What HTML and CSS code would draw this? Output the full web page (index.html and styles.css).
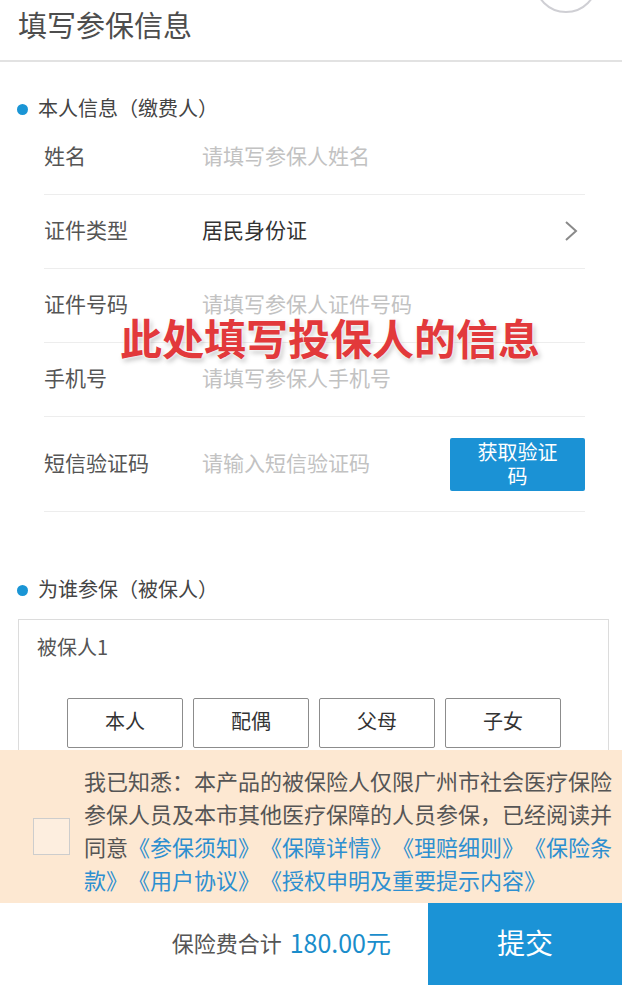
FILE: index.html
```html
<!DOCTYPE html>
<html lang="zh-CN">
<head>
<meta charset="utf-8">
<title>填写参保信息</title>
<link rel="stylesheet" href="styles.css">
</head>
<body>
<div class="page">
  <div class="main">
    <header class="header">
      <h1 class="title">填写参保信息</h1>
      <span class="corner-circle"></span>
    </header>

    <div class="section-title section-title-1"><span class="dot"></span>本人信息（缴费人）</div>
    <div class="form">
      <div class="row">
        <span class="label">姓名</span>
        <span class="placeholder">请填写参保人姓名</span>
      </div>
      <div class="row">
        <span class="label">证件类型</span>
        <span class="value">居民身份证</span>
        <svg class="chevron" width="14" height="22" viewBox="0 0 14 22"><polyline points="2,2 12,11 2,20" fill="none" stroke="#8a8a8a" stroke-width="2"/></svg>
      </div>
      <div class="row">
        <span class="label">证件号码</span>
        <span class="placeholder">请填写参保人证件号码</span>
      </div>
      <div class="row">
        <span class="label">手机号</span>
        <span class="placeholder">请填写参保人手机号</span>
      </div>
      <div class="row row-tall">
        <span class="label">短信验证码</span>
        <span class="placeholder">请输入短信验证码</span>
        <button class="code-btn">获取验证<br>码</button>
      </div>
    </div>

    <div class="section-title section-title-2"><span class="dot"></span>为谁参保（被保人）</div>
    <div class="insured-box">
      <div class="insured-name">被保人1</div>
      <div class="relations">
        <button class="rel-btn">本人</button>
        <button class="rel-btn">配偶</button>
        <button class="rel-btn">父母</button>
        <button class="rel-btn">子女</button>
      </div>
    </div>

    <div class="annotation">此处填写投保人的信息</div>
  </div>

  <div class="agreement">
    <span class="checkbox"></span>
    <p class="agree-text">我已知悉：本产品的被保险人仅限广州市社会医疗保险参保人员及本市其他医疗保障的人员参保，已经阅读并同意<span class="link">《参保须知》《保障详情》《理赔细则》《保险条款》《用户协议》《授权申明及重要提示内容》</span></p>
  </div>

  <footer class="footer">
    <div class="total"><span class="total-label">保险费合计</span><span class="total-price">180.00元</span></div>
    <button class="submit">提交</button>
  </footer>
</div>
</body>
</html>
```

FILE: styles.css
```css
* { box-sizing: border-box; }
html, body { margin: 0; padding: 0; background: #fff; }
body {
  font-family: "Noto Sans CJK SC", "Noto Sans", sans-serif;
  color: #444;
  text-spacing-trim: space-all;
}
.page { width: 622px; height: 985px; overflow: hidden; display: flex; flex-direction: column; }
.main { position: relative; height: 750px; overflow: hidden; flex: none; }

.header {
  height: 62px;
  border-bottom: 2px solid #e2e2e2;
  padding: 0 18px;
}
.title {
  margin: 0;
  font-size: 29px;
  font-weight: 400;
  line-height: 48px;
  color: #4d4d4d;
}
.corner-circle {
  position: absolute;
  left: 534px;
  top: -51px;
  width: 64px;
  height: 64px;
  border: 2px solid #cfcfd4;
  border-radius: 50%;
}

.section-title {
  display: flex;
  align-items: center;
  margin-top: 29px;
  height: 30px;
  padding-left: 17px;
  padding-bottom: 3px;
  font-size: 20px;
  color: #444;
}
.section-title-1 { padding-bottom: 0; padding-top: 3px; }
.section-title-2 { margin-top: 63px; }
.dot {
  width: 11px;
  height: 11px;
  border-radius: 50%;
  background: #1a95d5;
  margin-right: 10px;
  margin-top: 3px;
}

.form { margin: 0 37px 0 44px; }
.row {
  display: flex;
  align-items: center;
  height: 74px;
  padding-bottom: 5px;
  border-bottom: 1px solid #ededed;
  font-size: 21px;
}
.row-tall { height: 95px; }
.label { width: 158px; color: #555; }
.placeholder { color: #c2c2c2; }
.value { color: #333; }
.chevron { margin-left: auto; margin-right: 7px; margin-top: 3px; }
.code-btn {
  margin-left: auto;
  margin-top: 5px;
  width: 135px;
  height: 53px;
  border: none;
  border-radius: 2px;
  background: #1b92d5;
  color: #fff;
  font-family: inherit;
  font-size: 20px;
  line-height: 24px;
  padding: 0;
}

.insured-box {
  margin: 14px 13px 0 18px;
  border: 1px solid #dcdcdc;
  padding: 12px 0 20px 48px;
}
.insured-name {
  font-size: 20px;
  line-height: 30px;
  color: #555;
  margin-left: -30px;
}
.relations { display: flex; gap: 10px; margin-top: 36px; }
.rel-btn {
  width: 116px;
  height: 50px;
  background: #fff;
  border: 1.5px solid #8c8c8c;
  border-radius: 2px;
  font-family: inherit;
  font-size: 20px;
  line-height: 1;
  padding: 0 0 4px;
  color: #333;
}

.annotation {
  position: absolute;
  left: 120px;
  top: 311px;
  font-size: 42px;
  line-height: 52px;
  font-weight: 700;
  color: #e2393b;
  white-space: nowrap;
  text-shadow: 0 0 2px #fff, 0 0 4px #fff, 2px 3px 5px rgba(0,0,0,0.25);
}

.agreement {
  flex: none;
  height: 153px;
  background: #fde8d2;
  display: flex;
  align-items: flex-start;
  padding-left: 33px;
}
.checkbox {
  flex: none;
  width: 37px;
  height: 37px;
  border: 1.5px solid #cdcdcd;
  background: #fdeedf;
  margin-top: 68px;
  margin-right: 14px;
}
.agree-text {
  margin: 0;
  padding-top: 14px;
  width: 538px;
  font-size: 22px;
  line-height: 33px;
  color: #555;
  line-break: anywhere;
  word-break: break-all;
}
.link { color: #2d8fd0; }

.footer { flex: 1; display: flex; }
.total {
  flex: 1;
  display: flex;
  align-items: center;
  justify-content: flex-end;
  padding-right: 37px;
  padding-bottom: 4px;
  background: #fff;
}
.total-label { font-size: 22px; color: #555; margin-right: 8px; }
.total-price { font-size: 25px; color: #1a8dcb; }
.submit {
  width: 194px;
  border: none;
  background: #1b93d6;
  color: #fff;
  font-family: inherit;
  font-size: 28px;
  padding: 0 0 4px;
}
```
